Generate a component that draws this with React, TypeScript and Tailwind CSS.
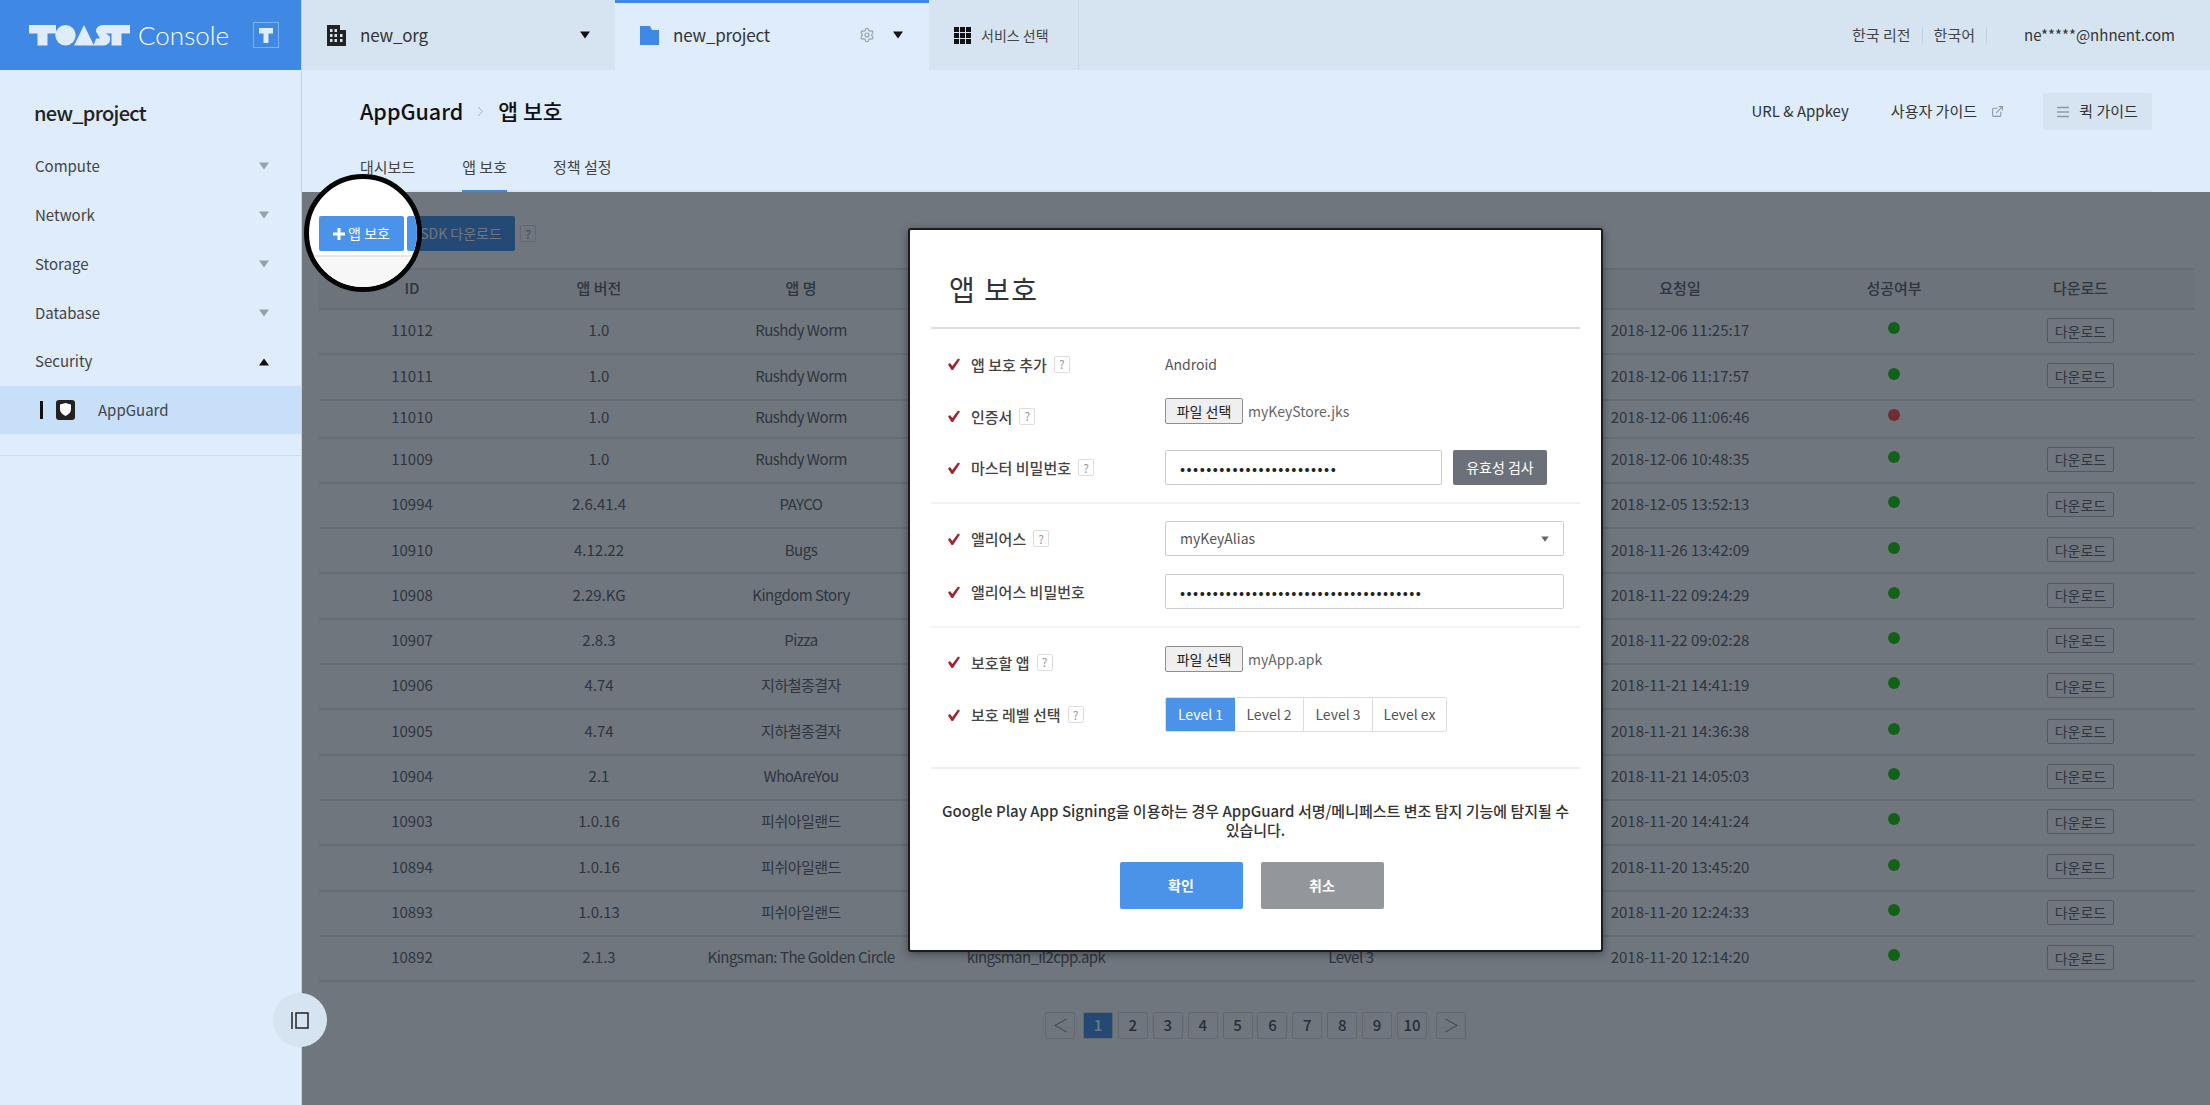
import { ChevronRight, ExternalLink, Settings } from "lucide-react";

const FONT = "font-['Noto_Sans_CJK_KR','Noto_Sans',sans-serif]";

const MENU = ["Compute", "Network", "Storage", "Database"];

const ROWS = [
  { id: "11012", ver: "1.0", name: "Rushdy Worm", date: "2018-12-06 11:25:17" },
  { id: "11011", ver: "1.0", name: "Rushdy Worm", date: "2018-12-06 11:17:57" },
  { id: "11010", ver: "1.0", name: "Rushdy Worm", date: "2018-12-06 11:06:46", failed: true },
  { id: "11009", ver: "1.0", name: "Rushdy Worm", date: "2018-12-06 10:48:35" },
  { id: "10994", ver: "2.6.41.4", name: "PAYCO", date: "2018-12-05 13:52:13" },
  { id: "10910", ver: "4.12.22", name: "Bugs", date: "2018-11-26 13:42:09" },
  { id: "10908", ver: "2.29.KG", name: "Kingdom Story", date: "2018-11-22 09:24:29" },
  { id: "10907", ver: "2.8.3", name: "Pizza", date: "2018-11-22 09:02:28" },
  { id: "10906", ver: "4.74", name: "지하철종결자", date: "2018-11-21 14:41:19" },
  { id: "10905", ver: "4.74", name: "지하철종결자", date: "2018-11-21 14:36:38" },
  { id: "10904", ver: "2.1", name: "WhoAreYou", date: "2018-11-21 14:05:03" },
  { id: "10903", ver: "1.0.16", name: "피쉬아일랜드", date: "2018-11-20 14:41:24" },
  { id: "10894", ver: "1.0.16", name: "피쉬아일랜드", date: "2018-11-20 13:45:20" },
  { id: "10893", ver: "1.0.13", name: "피쉬아일랜드", date: "2018-11-20 12:24:33" },
  { id: "10892", ver: "2.1.3", name: "Kingsman: The Golden Circle", date: "2018-11-20 12:14:20", file: "kingsman_il2cpp.apk", level: "Level 3" },
];

function Caret({ up, className }: { up?: boolean; className: string }) {
  return (
    <svg width="10" height="8" viewBox="0 0 10 8" className={className}>
      <path d={up ? "M5 0.5 10 7.5H0Z" : "M0 0.5H10L5 7.5Z"} fill="currentColor" />
    </svg>
  );
}

function Help({ className = "" }: { className?: string }) {
  return (
    <span className={`inline-flex h-[17px] w-[16px] items-center justify-center rounded-[2px] border border-[#ddd] bg-white text-[12px] leading-none text-[#999] ${className}`}>
      ?
    </span>
  );
}

function ToastLogo() {
  return (
    <svg width="101" height="21" viewBox="0 0 101 21" fill="#deecfb">
      <path d="M0 0H27V8.5H18.5V20.5H8.5V8.5H0Z" />
      <circle cx="36.5" cy="10.2" r="10.2" />
      <path d="M55 0 65 20.5H45Z" />
      <path d="M67 6.5C67 2.5 70 0 74.500 0H81L79 7H75L80.500 11C82.500 16 79.500 20.500 74.500 20.500H64.500L67 13.500H71Z" />
      <path d="M74 0H101V8.500H92.500V20.500H82.500V8.500H74Z" />
    </svg>
  );
}

function Sidebar() {
  return (
    <aside className="relative z-20 flex w-[302px] shrink-0 flex-col border-r border-[#c5d3e1] bg-[#deecfb]">
      <div className="flex h-[70px] items-center bg-[#3f88e3] pl-[29px]">
        <ToastLogo />
        <span className="ml-[8px] font-['Lato',sans-serif] text-[26px] font-light leading-none text-white">Console</span>
        <span className="ml-auto mr-[22px] flex h-[26px] w-[26px] items-center justify-center border border-[#7fb1ee]">
          <svg width="14" height="15" viewBox="0 0 14 15" fill="#deecfb">
            <path d="M0 0H14V5.500H9.500V15H4.500V5.500H0Z" />
          </svg>
        </span>
      </div>
      <div className="pl-[34px] pt-[29px] text-[20px] font-medium leading-[28px] tracking-[-0.7px] text-[#222]">new_project</div>
      <nav className="mt-[15px] flex flex-col">
        {MENU.map((item) => (
          <div key={item} className="flex h-[48.800px] items-center justify-between pl-[35px] pr-[32px] text-[15px] text-[#444]">
            {item}
            <Caret className="text-[#9aa0a7]" />
          </div>
        ))}
        <div className="flex h-[48.800px] items-center justify-between pl-[35px] pr-[32px] text-[15px] text-[#444]">
          Security
          <Caret up className="text-[#111]" />
        </div>
        <div className="flex h-[48px] items-center bg-[#c8dffa] pl-[40px] text-[15px] text-[#444]">
          <span className="h-[18px] w-[3px] bg-[#111]" />
          <span className="ml-[13px] flex h-[20px] w-[19px] items-center justify-center rounded-[3px] bg-[#222]">
            <svg width="11" height="13" viewBox="0 0 11 13" fill="white">
              <path d="M0 1.500 5.500 0 11 1.500V6.500C11 9.500 8.500 11.500 5.500 13 2.500 11.500 0 9.500 0 6.500Z" />
            </svg>
          </span>
          <span className="ml-[23px]">AppGuard</span>
        </div>
      </nav>
      <div className="mt-[21px] border-t border-[#cfdeee]" />
      <button className="absolute left-[273px] top-[993px] flex h-[54px] w-[54px] items-center justify-center rounded-full bg-[#d6e4f2]">
        <svg width="18" height="17" viewBox="0 0 18 17" fill="none" stroke="#222" strokeWidth="1.500">
          <path d="M1 0V17" />
          <rect x="5" y="1" width="12" height="15" />
        </svg>
      </button>
    </aside>
  );
}

function TopBar() {
  return (
    <header className="flex h-[70px] items-stretch bg-[#d6e4f2] text-[#333]">
      <div className="flex w-[313px] items-center pl-[25px]">
        <svg width="19" height="21" viewBox="0 0 19 21" fill="#222">
          <path fillRule="evenodd" d="M0 0H13V5H19V21H0ZM3 4V7H5.500V4ZM7.500 4V7H10V4ZM3 9V12H5.500V9ZM7.500 9V12H10V9ZM3 14V17H5.500V14ZM7.500 14V17H10V14ZM13 9V12H15.500V9ZM13 14V17H15.500V14Z" />
        </svg>
        <span className="ml-[14px] text-[17px] tracking-[-0.2px]">new_org</span>
        <Caret className="ml-auto mr-[25px] text-[#111]" />
      </div>
      <div className="flex w-[314px] items-center border-t-[3px] border-[#3f88e3] bg-[#deecfb] pb-[3px] pl-[25px]">
        <svg width="19" height="19" viewBox="0 0 19 19" fill="#3f88e3">
          <path d="M0 0H10L12 4H19V19H0Z" />
        </svg>
        <span className="ml-[14px] text-[17px] tracking-[-0.2px]">new_project</span>
        <Settings size={16} strokeWidth={1.800} className="ml-auto text-[#9aa2ab]" />
        <Caret className="ml-[18px] mr-[26px] text-[#111]" />
      </div>
      <div className="flex w-[150px] items-center border-r border-[#c9d8e8] pl-[25px]">
        <svg width="17" height="17" viewBox="0 0 17 17" fill="#111">
          <path d="M0 0H5V5H0ZM6 0H11V5H6ZM12 0H17V5H12ZM0 6H5V11H0ZM6 6H11V11H6ZM12 6H17V11H12ZM0 12H5V17H0ZM6 12H11V17H6ZM12 12H17V17H12Z" />
        </svg>
        <span className="ml-[10px] text-[14px] text-[#444]">서비스 선택</span>
      </div>
      <div className="ml-auto flex items-center pr-[35px] text-[15px] text-[#444]">
        <span>한국 리전</span>
        <span className="mx-[11px] h-[16px] w-px bg-[#c3d0dd]" />
        <span>한국어</span>
        <span className="ml-[11px] mr-[37px] h-[16px] w-px bg-[#c3d0dd]" />
        <span className="text-[#333]">ne*****@nhnent.com</span>
      </div>
    </header>
  );
}

function PageHead() {
  return (
    <section className="flex h-[122px] flex-col bg-[#deecfb] pl-[58px] pr-[58px]">
      <div className="flex h-[82px] items-center pt-[1px]">
        <span className="text-[21.500px] font-medium text-[#111]">AppGuard</span>
        <ChevronRight size={17} strokeWidth={1} className="mx-[9px] text-[#8c98a5]" />
        <span className="text-[21.500px] font-medium text-[#111]">앱 보호</span>
        <span className="ml-auto text-[15px] text-[#333]">URL &amp; Appkey</span>
        <span className="ml-[42px] text-[15px] text-[#333]">사용자 가이드</span>
        <ExternalLink size={13} className="ml-[14px] text-[#8c98a5]" />
        <div className="ml-[39px] flex h-[37px] w-[109px] items-center justify-center gap-[10px] rounded-[2px] bg-[#d6e4f2] text-[15px] text-[#333]">
          <svg width="12" height="12" viewBox="0 0 12 12" fill="none" stroke="#8c98a5" strokeWidth="1.500">
            <path d="M0 1.500H12M0 6H12M0 10.500H12" />
          </svg>
          퀵 가이드
        </div>
      </div>
      <div className="flex flex-1 border-b-2 border-[#d6e4f2] text-[15px] text-[#444]">
        <span className="pt-[4px]">대시보드</span>
        <span className="relative ml-[47px] pt-[4px]">
          앱 보호
          <span className="absolute -bottom-[2px] left-0 right-0 h-[2px] bg-[#3f88e3]" />
        </span>
        <span className="ml-[46px] pt-[4px]">정책 설정</span>
      </div>
    </section>
  );
}

function SdkButton({ className = "" }: { className?: string }) {
  return (
    <button className={`flex h-[35px] w-[108px] items-center justify-center rounded-[2px] bg-[#4a93e8] text-[14px] text-white ${className}`}>
      SDK 다운로드
    </button>
  );
}

function AddButton() {
  return (
    <button className="flex h-[35px] w-[85px] items-center justify-center gap-[3px] rounded-[2px] bg-[#4a93e8] text-[14px] text-white">
      <svg width="12" height="12" viewBox="0 0 12 12" fill="white">
        <path d="M4.500 0H7.500V4.500H12V7.500H7.500V12H4.500V7.500H0V4.500H4.500Z" />
      </svg>
      앱 보호
    </button>
  );
}

function AppTable() {
  return (
    <table className="w-full table-fixed border-collapse text-center text-[15px] text-[#666]">
      <colgroup>
        <col className="w-[186px]" />
        <col className="w-[188px]" />
        <col className="w-[216px]" />
        <col className="w-[254px]" />
        <col className="w-[376px]" />
        <col className="w-[282px]" />
        <col className="w-[146px]" />
        <col className="w-[227px]" />
      </colgroup>
      <thead>
        <tr className="h-[40px] border-y-2 border-[#e6e6e6] bg-[#f7f7f7] font-medium">
          <th className="pb-[2px] font-medium">ID</th>
          <th className="pb-[2px] font-medium">앱 버전</th>
          <th className="pb-[2px] font-medium">앱 명</th>
          <th />
          <th />
          <th className="pb-[2px] font-medium">요청일</th>
          <th className="pb-[2px] font-medium">성공여부</th>
          <th className="pb-[2px] font-medium">다운로드</th>
        </tr>
      </thead>
      <tbody className="[&_td]:pb-[2px]">
        {ROWS.map((row) => (
          <tr key={row.id} className={`border-b-2 border-[#e6e6e6] ${row.failed ? "h-[38px]" : "h-[45.300px]"}`}>
            <td>{row.id}</td>
            <td>{row.ver}</td>
            <td className="tracking-[-0.5px]">{row.name}</td>
            <td className="tracking-[-0.6px]">{row.file}</td>
            <td className="tracking-[-0.4px]">{row.level}</td>
            <td>{row.date}</td>
            <td>
              <span className={`relative -top-[4px] inline-block h-[12px] w-[12px] rounded-full align-middle ${row.failed ? "bg-[#ff4f4f]" : "bg-[#1fd00c]"}`} />
            </td>
            <td>
              {!row.failed && (
                <button className="h-[25px] w-[67px] rounded-[2px] border border-[#bbb] bg-white text-[14px] leading-none text-[#666]">
                  다운로드
                </button>
              )}
            </td>
          </tr>
        ))}
      </tbody>
    </table>
  );
}

function Pager() {
  const pages = [1, 2, 3, 4, 5, 6, 7, 8, 9, 10];
  const box = "flex h-[27px] w-[30px] items-center justify-center rounded-[2px] border border-[#ddd]";
  return (
    <div className="ml-[726px] mt-[30px] flex text-[15px] font-medium text-[#555]">
      <span className={`${box} mr-[8px] text-[#999]`}>
        <svg width="13" height="15" viewBox="0 0 13 15" fill="none" stroke="currentColor" strokeWidth="1.200">
          <path d="M12.500 1 1 7.500 12.500 14" />
        </svg>
      </span>
      <div className="flex gap-[4.900px]">
        {pages.map((p) => (
          <span key={p} className={p === 1 ? `${box} border-[#4a93e8] bg-[#4a93e8] text-white` : box}>
            {p}
          </span>
        ))}
      </div>
      <span className={`${box} ml-[9px] text-[#999]`}>
        <svg width="13" height="15" viewBox="0 0 13 15" fill="none" stroke="currentColor" strokeWidth="1.200">
          <path d="M0.500 1 12 7.500 0.500 14" />
        </svg>
      </span>
    </div>
  );
}

function Check() {
  return (
    <svg width="12" height="12" viewBox="0 0 12 12" className="shrink-0" fill="#a3232f">
      <path d="M0 6.500 2 5 4.300 8 10 0.500 12 1.500 5 12H3.500Z" />
    </svg>
  );
}

function Field({ label, help, labelClass = "", className, children }: { label: string; help?: boolean; labelClass?: string; className: string; children: React.ReactNode }) {
  return (
    <div className={`flex items-center ${className}`}>
      <div className={`flex w-[234px] items-center pl-[17px] ${labelClass}`}>
        <Check />
        <span className="ml-[11px] text-[15px] font-medium leading-none text-[#444]">{label}</span>
        {help && <Help className="ml-[7px] font-normal" />}
      </div>
      <div className="flex items-center">{children}</div>
    </div>
  );
}

function FileInput({ name }: { name: string }) {
  return (
    <div className="flex items-center">
      <button className="h-[26px] w-[78px] rounded-[2px] border border-[#8f8f8f] bg-[#efefef] text-[14px] leading-none text-[#222]">파일 선택</button>
      <span className="ml-[5px] text-[14px] text-[#666]">{name}</span>
    </div>
  );
}

function PasswordDots({ count, className }: { count: number; className: string }) {
  return (
    <input
      type="password"
      readOnly
      value={"x".repeat(count)}
      className={`h-[35px] rounded-[2px] border border-[#ccc] bg-white px-[14px] text-[15px] tracking-[1.450px] text-[#222] outline-none ${className}`}
    />
  );
}

function Modal() {
  const levels = [
    { label: "Level 1", cls: "w-[69px] bg-[#4a93e8] text-white" },
    { label: "Level 2", cls: "w-[68px]" },
    { label: "Level 3", cls: "w-[69px] border-l border-[#ddd]" },
    { label: "Level ex", cls: "flex-1 border-l border-[#ddd]" },
  ];
  return (
    <div className="absolute left-[606px] top-[36px] h-[724px] w-[695px] rounded-[3px] border-2 border-[#1c1c1c] bg-white shadow-[0_2px_8px_rgba(0,0,0,0.4)]">
      <div className="mx-[21px] border-b-2 border-[#ddd] pb-[19px] pl-[18px] pt-[40px] text-[28px] leading-[38px] tracking-[1.500px] text-[#333]">
        앱 보호
      </div>
      <div className="mx-[21px]">
        <Field label="앱 보호 추가" help className="mt-[22px] h-[26px]">
          <span className="text-[14px] text-[#555]">Android</span>
        </Field>
        <Field label="인증서" help labelClass="pt-[10px]" className="mt-[21px] h-[26px]">
          <FileInput name="myKeyStore.jks" />
        </Field>
        <Field label="마스터 비밀번호" help className="mt-[26px] h-[35px]">
          <PasswordDots count={24} className="w-[277px]" />
          <button className="ml-[11px] h-[35px] w-[94px] rounded-[2px] bg-[#6c7078] text-[14px] text-white">유효성 검사</button>
        </Field>
        <div className="mt-[17px] border-t-2 border-[#f2f2f2]" />
        <Field label="앨리어스" help className="mt-[17px] h-[35px]">
          <div className="flex h-[35px] w-[399px] items-center justify-between rounded-[2px] border border-[#ccc] bg-white px-[14px] text-[14px] text-[#555]">
            myKeyAlias
            <Caret className="h-[6px] w-[8px] text-[#666]" />
          </div>
        </Field>
        <Field label="앨리어스 비밀번호" className="mt-[18px] h-[35px]">
          <PasswordDots count={37} className="w-[399px]" />
        </Field>
        <div className="mt-[17px] border-t-2 border-[#f2f2f2]" />
        <Field label="보호할 앱" help labelClass="pt-[6px]" className="mt-[18px] h-[26px]">
          <FileInput name="myApp.apk" />
        </Field>
        <Field label="보호 레벨 선택" help className="mt-[25px] h-[35px]">
          <div className="flex h-[35px] w-[282px] overflow-hidden rounded-[2px] border border-[#ddd] text-[14px] text-[#555]">
            {levels.map((level) => (
              <span key={level.label} className={`flex items-center justify-center ${level.cls}`}>
                {level.label}
              </span>
            ))}
          </div>
        </Field>
        <div className="mt-[35px] border-t-2 border-[#eee]" />
        <p className="mt-[32px] break-keep text-center text-[15px] font-medium leading-[19px] text-[#333]">
          Google Play App Signing을 이용하는 경우 AppGuard 서명/메니페스트 변조 탐지 기능에 탐지될 수 있습니다.
        </p>
        <div className="mt-[23px] flex justify-center gap-[18px] pr-[8px]">
          <button className="h-[47px] w-[123px] rounded-[2px] bg-[#4a93e8] text-[14px] font-bold text-white">확인</button>
          <button className="h-[47px] w-[123px] rounded-[2px] bg-[#93969b] text-[14px] font-bold text-white">취소</button>
        </div>
      </div>
    </div>
  );
}

export default function App() {
  return (
    <div className={`flex h-[1105px] w-full overflow-hidden ${FONT}`}>
      <Sidebar />
      <main className="flex min-w-0 flex-1 flex-col">
        <TopBar />
        <PageHead />
        <section className="relative flex-1 bg-white pl-[17px] pr-[18px] pt-[24px]">
          <div className="flex items-center gap-[3px]">
            <AddButton />
            <SdkButton />
            <Help className="ml-[2px]" />
          </div>
          <div className="mt-[17px]">
            <AppTable />
          </div>
          <Pager />

          {/* dim layer over the page */}
          <div className="absolute inset-0 bg-[rgba(7,19,33,0.58)]" />

          {/* highlight circle around the add button */}
          <div className="absolute -top-[18px] left-[2px] z-10 h-[118px] w-[118px] overflow-hidden rounded-full border-[5px] border-[#050505] bg-white">
            <div className="absolute left-0 right-0 top-[76px] h-[50px] border-t-2 border-[#e6e6e6] bg-[#f7f7f7]" />
            <div className="absolute left-[10px] top-[37px] flex gap-[3px]">
              <AddButton />
              <SdkButton />
            </div>
          </div>

          <Modal />
        </section>
      </main>
    </div>
  );
}
